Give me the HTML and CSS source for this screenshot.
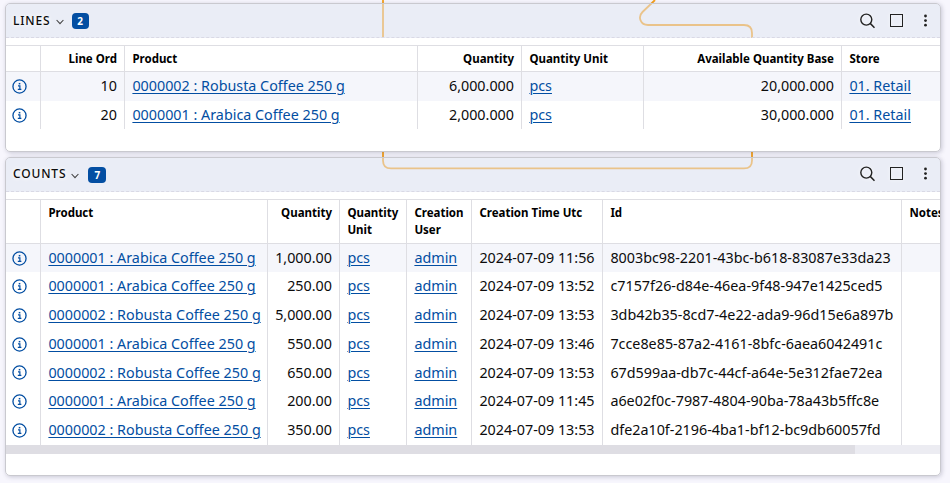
FILE: index.html
```
<!DOCTYPE html>
<html lang="en">
<head>
<meta charset="utf-8">
<title>Lines and counts</title>
<link rel="stylesheet" href="styles.css">
</head>
<body>
<svg class="backdrop" width="950" height="483" viewBox="0 0 950 483" fill="none" stroke="#f6a01c" stroke-width="1.8"><path d="M383 0V160.4Q383 168.4 391 168.4H744Q752 168.4 752 160.4V33Q752 25 744 25H648C640.500 25 637.500 17 642.500 12L655 0"/></svg>
<svg class="symbols" width="0" height="0">
<symbol id="info" viewBox="0 0 16 16"><circle cx="8" cy="8" r="7" fill="none" stroke="currentColor" stroke-width="1.4"/><path d="M6.4 7.3H8.4V11.1M6.2 11.1H10" fill="none" stroke="currentColor" stroke-width="1.3"/><rect x="7.2" y="4.2" width="1.7" height="1.6" fill="currentColor"/></symbol>
<symbol id="search" viewBox="0 0 16 16"><circle cx="7.3" cy="6.6" r="5.5" fill="none" stroke="currentColor" stroke-width="1.4"/><path d="M11.200 10.4L15.500 14.7" stroke="currentColor" stroke-width="1.5"/></symbol>
<symbol id="box" viewBox="0 0 16 16"><rect x="2.5" y="1.5" width="12" height="12" fill="none" stroke="currentColor"/></symbol>
<symbol id="dots" viewBox="0 0 16 16"><g fill="currentColor"><circle cx="8.5" cy="3" r="1.4"/><circle cx="8.5" cy="7.6" r="1.4"/><circle cx="8.5" cy="12.2" r="1.4"/></g></symbol>
<symbol id="chevron" viewBox="0 0 8 8"><path d="M.6 2L4 5.7L7.4 2" fill="none" stroke="currentColor" stroke-width="1.1"/></symbol>
</svg>
<main>
<section class="panel lines">
<header><h2>LINES</h2><svg class="chevron"><use href="#chevron"/></svg><span class="badge">2</span><div class="tools"><svg><use href="#search"/></svg><svg><use href="#box"/></svg><svg><use href="#dots"/></svg></div></header>
<div class="table">
<div class="row head"><span></span><span class="num">Line Ord</span><span>Product</span><span class="num">Quantity</span><span>Quantity Unit</span><span class="num">Available Quantity Base</span><span>Store</span></div>
<div class="row"><span class="info"><svg><use href="#info"/></svg></span><span class="num">10</span><span><a>0000002 : Robusta Coffee 250 g</a></span><span class="num">6,000.000</span><span><a>pcs</a></span><span class="num">20,000.000</span><span><a>01. Retail</a></span></div>
<div class="row"><span class="info"><svg><use href="#info"/></svg></span><span class="num">20</span><span><a>0000001 : Arabica Coffee 250 g</a></span><span class="num">2,000.000</span><span><a>pcs</a></span><span class="num">30,000.000</span><span><a>01. Retail</a></span></div>
</div>
</section>
<section class="panel counts">
<header><h2>COUNTS</h2><svg class="chevron"><use href="#chevron"/></svg><span class="badge">7</span><div class="tools"><svg><use href="#search"/></svg><svg><use href="#box"/></svg><svg><use href="#dots"/></svg></div></header>
<div class="table">
<div class="row head"><span></span><span>Product</span><span class="num">Quantity</span><span>Quantity<br>Unit</span><span>Creation<br>User</span><span>Creation Time Utc</span><span>Id</span><span>Notes</span></div>
<div class="row"><span class="info"><svg><use href="#info"/></svg></span><span><a>0000001 : Arabica Coffee 250 g</a></span><span class="num">1,000.00</span><span><a>pcs</a></span><span><a>admin</a></span><span>2024-07-09 11:56</span><span>8003bc98-2201-43bc-b618-83087e33da23</span><span></span></div>
<div class="row"><span class="info"><svg><use href="#info"/></svg></span><span><a>0000001 : Arabica Coffee 250 g</a></span><span class="num">250.00</span><span><a>pcs</a></span><span><a>admin</a></span><span>2024-07-09 13:52</span><span>c7157f26-d84e-46ea-9f48-947e1425ced5</span><span></span></div>
<div class="row"><span class="info"><svg><use href="#info"/></svg></span><span><a>0000002 : Robusta Coffee 250 g</a></span><span class="num">5,000.00</span><span><a>pcs</a></span><span><a>admin</a></span><span>2024-07-09 13:53</span><span>3db42b35-8cd7-4e22-ada9-96d15e6a897b</span><span></span></div>
<div class="row"><span class="info"><svg><use href="#info"/></svg></span><span><a>0000001 : Arabica Coffee 250 g</a></span><span class="num">550.00</span><span><a>pcs</a></span><span><a>admin</a></span><span>2024-07-09 13:46</span><span>7cce8e85-87a2-4161-8bfc-6aea6042491c</span><span></span></div>
<div class="row"><span class="info"><svg><use href="#info"/></svg></span><span><a>0000002 : Robusta Coffee 250 g</a></span><span class="num">650.00</span><span><a>pcs</a></span><span><a>admin</a></span><span>2024-07-09 13:53</span><span>67d599aa-db7c-44cf-a64e-5e312fae72ea</span><span></span></div>
<div class="row"><span class="info"><svg><use href="#info"/></svg></span><span><a>0000001 : Arabica Coffee 250 g</a></span><span class="num">200.00</span><span><a>pcs</a></span><span><a>admin</a></span><span>2024-07-09 11:45</span><span>a6e02f0c-7987-4804-90ba-78a43b5ffc8e</span><span></span></div>
<div class="row"><span class="info"><svg><use href="#info"/></svg></span><span><a>0000002 : Robusta Coffee 250 g</a></span><span class="num">350.00</span><span><a>pcs</a></span><span><a>admin</a></span><span>2024-07-09 13:53</span><span>dfe2a10f-2196-4ba1-bf12-bc9db60057fd</span><span></span></div>
</div>
<div class="scrollbar"><div class="thumb"></div></div>
</section>
</main>
</body>
</html>
```
FILE: styles.css
```
* { box-sizing: border-box; }
body { margin: 0; height: 483px; overflow: hidden; background: #f7f6fd; font: 14.33px/20px "Noto Sans", sans-serif; color: #0c0c0c; }
.backdrop { position: absolute; left: 0; top: 0; z-index: -1; }
.symbols { position: absolute; }
main { display: flex; flex-direction: column; gap: 5px; padding: 3px 9px 0 5px; }
.panel { border: 1px solid #c9c9cf; border-radius: 5px; overflow: hidden; box-shadow: 1px 1px 4px rgba(60, 60, 90, .25); background: linear-gradient(transparent 34px, #fff 34px); }
.lines { height: 149px; }
.counts { height: 319px; }
header { display: flex; align-items: center; height: 34px; padding: 0 7px; background: rgba(222, 229, 240, .52); border-bottom: 1px dashed #d9d9e5; }
h2 { margin: 0; font-size: 12px; font-weight: 500; letter-spacing: .85px; line-height: 20px; text-shadow: 0 0 4px #fff, 0 0 6px #fff; }
.chevron { width: 8px; height: 8px; margin: 2px 8px 0 5px; color: #444; }
.badge { width: 17px; height: 16px; border-radius: 4px; background: #034ea2; color: #fff; font-size: 10px; font-weight: 700; line-height: 16px; text-align: center; }
.counts .badge { width: 18px; margin-left: 1px; }
.counts h2 { margin-top: -1px; }
.tools { display: flex; gap: 13px; margin-left: auto; color: #222; }
.tools svg { width: 16px; height: 16px; filter: drop-shadow(0 0 2px #fff); }
.counts .tools { margin-top: -1px; }
.table { margin-top: 7px; border-top: 1px solid #dedee3; background: #fff; }
.row { display: grid; height: 28.7px; }
.lines .row { grid-template-columns: 35px 84px 293px 104px 122px 198px 98px; }
.counts .row { grid-template-columns: 35px 227px 72px 67px 65px 131px 299px 70px; }
.row > span { padding: 0 7px 0 7.4px; border-right: 1px solid #dedee3; white-space: nowrap; line-height: 28.7px; }
.row > .num { padding-left: 0; text-align: right; }
.row > span:last-child { border-right: 0; }
.row > .info { display: flex; align-items: center; padding-left: 6px; color: #034ea2; }
.info svg { width: 15px; height: 15px; }
.row.head { height: 26px; border-bottom: 1px solid #dedee3; color: #000; font-size: 11.5px; font-weight: 700; }
.row.head > span { line-height: 17px; padding-top: 4px; }
.counts .row.head { height: 43.8px; }
.row:nth-child(2) { background: #f5f6fb; }
a { color: #034ea2; text-decoration: underline; text-underline-offset: 2px; text-decoration-thickness: 1px; }
.scrollbar { height: 9px; background: #ececf2; }
.thumb { width: 849px; height: 9px; background: #dedde3; }
```
